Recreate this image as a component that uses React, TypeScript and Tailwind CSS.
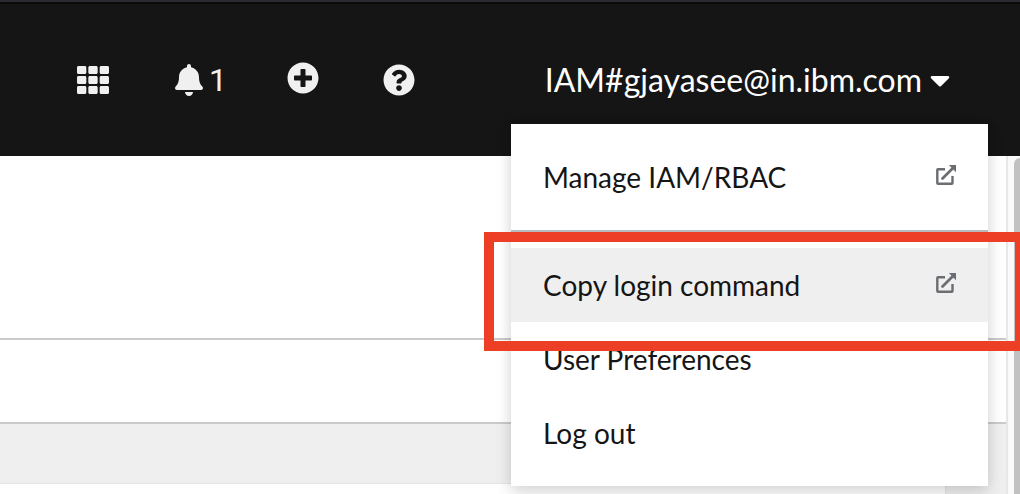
import type { ReactNode } from "react";
import { FaBell, FaCaretDown, FaPlusCircle, FaQuestionCircle, FaTh } from "react-icons/fa";

function ExternalLinkIcon() {
  return (
    <svg viewBox="0 0 20 20" className="size-5 shrink-0 text-[#6a6e73]" aria-hidden="true">
      <path d="M9 4.2H2Q1.3 4.2 1.3 4.9V18Q1.3 18.7 2 18.7H15.8Q16.5 18.7 16.5 18V11" fill="none" stroke="currentColor" strokeWidth="2.4" />
      <path d="M6.5 13.5 17 3" fill="none" stroke="currentColor" strokeWidth="2.8" strokeLinecap="round" />
      <path d="M12.8 0H20V7.2Z" fill="currentColor" />
    </svg>
  );
}

type MenuItemProps = { children: ReactNode; external?: boolean; active?: boolean };

function MenuItem({ children, external, active }: MenuItemProps) {
  return (
    <li className={active ? "bg-[#efefef]" : "bg-white"}>
      <a href="#" className="flex h-[74px] items-center justify-between px-8">
        <span>{children}</span>
        {external && <span className="pb-1"><ExternalLinkIcon /></span>}
      </a>
    </li>
  );
}

export default function App() {
  return (
    <div className="relative flex min-h-screen flex-col overflow-hidden bg-white font-['Lato',sans-serif] text-[#151515]">
      <div className="h-1 shrink-0 border-t-2 border-[#2b2a33] bg-[#0b0b0b]" />
      <header className="flex h-[152px] shrink-0 justify-end bg-[#151515] pr-[70px] text-[32px] text-[#f0f0f0]">
        <div className="flex grow items-center gap-16 pl-[77px]">
          <button type="button" aria-label="Applications"><FaTh /></button>
          <button type="button" aria-label="Notifications" className="-mr-1 flex items-center gap-1.5 pl-0.5">
            <FaBell className="h-8 w-7" />
            <span className="font-['Roboto',sans-serif]">1</span>
          </button>
          <button type="button" aria-label="Add" className="pb-1"><FaPlusCircle /></button>
          <button type="button" aria-label="Help"><FaQuestionCircle /></button>
        </div>
        <button type="button" className="flex items-center gap-2 text-white">
          <span>IAM#gjayasee@in.ibm.com</span>
          <FaCaretDown className="h-8 w-5" />
        </button>
      </header>

      <div className="flex grow">
        <main className="flex grow flex-col">
          <div className="h-[184px] border-b-2 border-[#cacaca]" />
          <div className="h-[84px] border-b-2 border-[#cacaca]" />
          <div className="flex grow flex-col bg-[#efefef] pt-[59px] pr-[60px]">
            <div className="grow border-t border-r border-[#e4e4e4] bg-white" />
          </div>
        </main>
        <div className="flex w-[14px] flex-col border-l-2 border-[#e7e7e7] bg-[#fafafa] pt-[2px] pl-[6px]">
          <div className="grow rounded-tl-md bg-[#c1c1c1]" />
        </div>
      </div>

      <nav aria-label="User menu" className="absolute top-[124px] right-8 w-[477px] bg-white py-4 text-[28px] shadow-[0_8px_16px_rgba(3,3,3,0.12),0_0_12px_rgba(3,3,3,0.08)]">
        <ul>
          <MenuItem external>Manage IAM/RBAC</MenuItem>
        </ul>
        <hr className="my-4 border-t-2 border-[#b8bbbe]" />
        <ul>
          <MenuItem external active>Copy login command</MenuItem>
          <MenuItem>User Preferences</MenuItem>
          <MenuItem>Log out</MenuItem>
        </ul>
      </nav>

      <div className="pointer-events-none absolute top-[232px] -right-[5px] h-[119px] w-[541px] border-10 border-[#ec3f25]" />
    </div>
  );
}
